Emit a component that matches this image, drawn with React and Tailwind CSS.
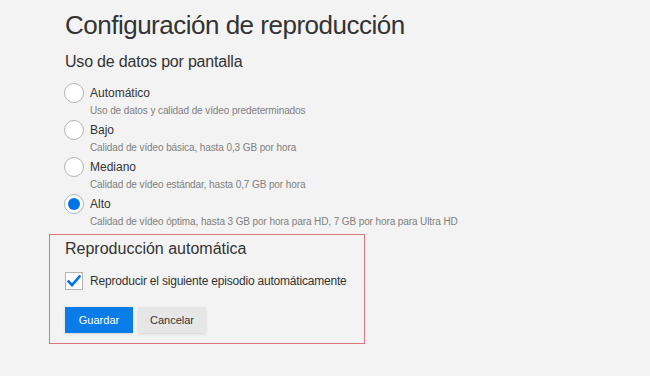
import React from 'react';

const options = [
    { label: 'Automático', desc: 'Uso de datos y calidad de vídeo predeterminados' },
    { label: 'Bajo', desc: 'Calidad de vídeo básica, hasta 0,3 GB por hora' },
    { label: 'Mediano', desc: 'Calidad de vídeo estándar, hasta 0,7 GB por hora' },
    { label: 'Alto', desc: 'Calidad de vídeo óptima, hasta 3 GB por hora para HD, 7 GB por hora para Ultra HD' },
];

const Radio = ({ checked }) => (
    <span className="w-[20px] h-[20px] rounded-full border border-[#b3b3b3] bg-white flex items-center justify-center shrink-0">
        {checked && <span className="w-[12px] h-[12px] rounded-full bg-[#0073e6]" />}
    </span>
);

const App = () => {
    return (
        <div className="w-[650px] h-[376px] bg-[#f3f3f3] text-[#333] overflow-hidden" style={{ fontFamily: '"Liberation Sans", Arial, sans-serif' }}>
            <div className="pl-[65px] pt-[8px]">
                <h1 className="text-[26px] font-light leading-[34px] tracking-[-0.5px]">Configuración de reproducción</h1>
                <h2 className="text-[16px] leading-[20px] mt-[10px] tracking-[-0.2px]">Uso de datos por pantalla</h2>
                <ul className="mt-[11px]">
                    {options.map((option, index) => (
                        <li key={index} className="h-[37px]">
                            <div className="flex items-center gap-[6px] -ml-[1px]">
                                <Radio checked={option.label === 'Alto'} />
                                <span className="text-[12px] leading-[20px]">{option.label}</span>
                            </div>
                            <p className="text-[10px] text-[#808080] leading-[14px] ml-[25px] mt-[1px] tracking-[-0.1px]">{option.desc}</p>
                        </li>
                    ))}
                </ul>
            </div>
            <div className="ml-[49px] mt-[3px] w-[316px] h-[110px] border border-[#d9777b] pl-[15px] pt-[3px]">
                <h2 className="text-[16px] leading-[22px]">Reproducción automática</h2>
                <div className="flex items-center gap-[7px] mt-[11px]">
                    <span className="w-[18px] h-[18px] border border-[#b3b3b3] bg-white flex items-center justify-center">
                        <svg width="14" height="12" viewBox="0 0 14 12">
                            <path d="M1.5 6.5 L5 10 L12.5 1.5" fill="none" stroke="#0073e6" strokeWidth="2.6" strokeLinecap="square" />
                        </svg>
                    </span>
                    <span className="text-[12px] leading-[20px] whitespace-nowrap tracking-[-0.2px]">Reproducir el siguiente episodio automáticamente</span>
                </div>
                <div className="flex gap-[5px] mt-[16px]">
                    <button className="w-[68px] h-[26px] bg-[#0a7ce8] text-white text-[11px] shadow-sm">Guardar</button>
                    <button className="w-[68px] h-[26px] bg-[#e6e6e6] text-[#333] text-[11px] shadow-sm">Cancelar</button>
                </div>
            </div>
        </div>
    );
};

export default App;
